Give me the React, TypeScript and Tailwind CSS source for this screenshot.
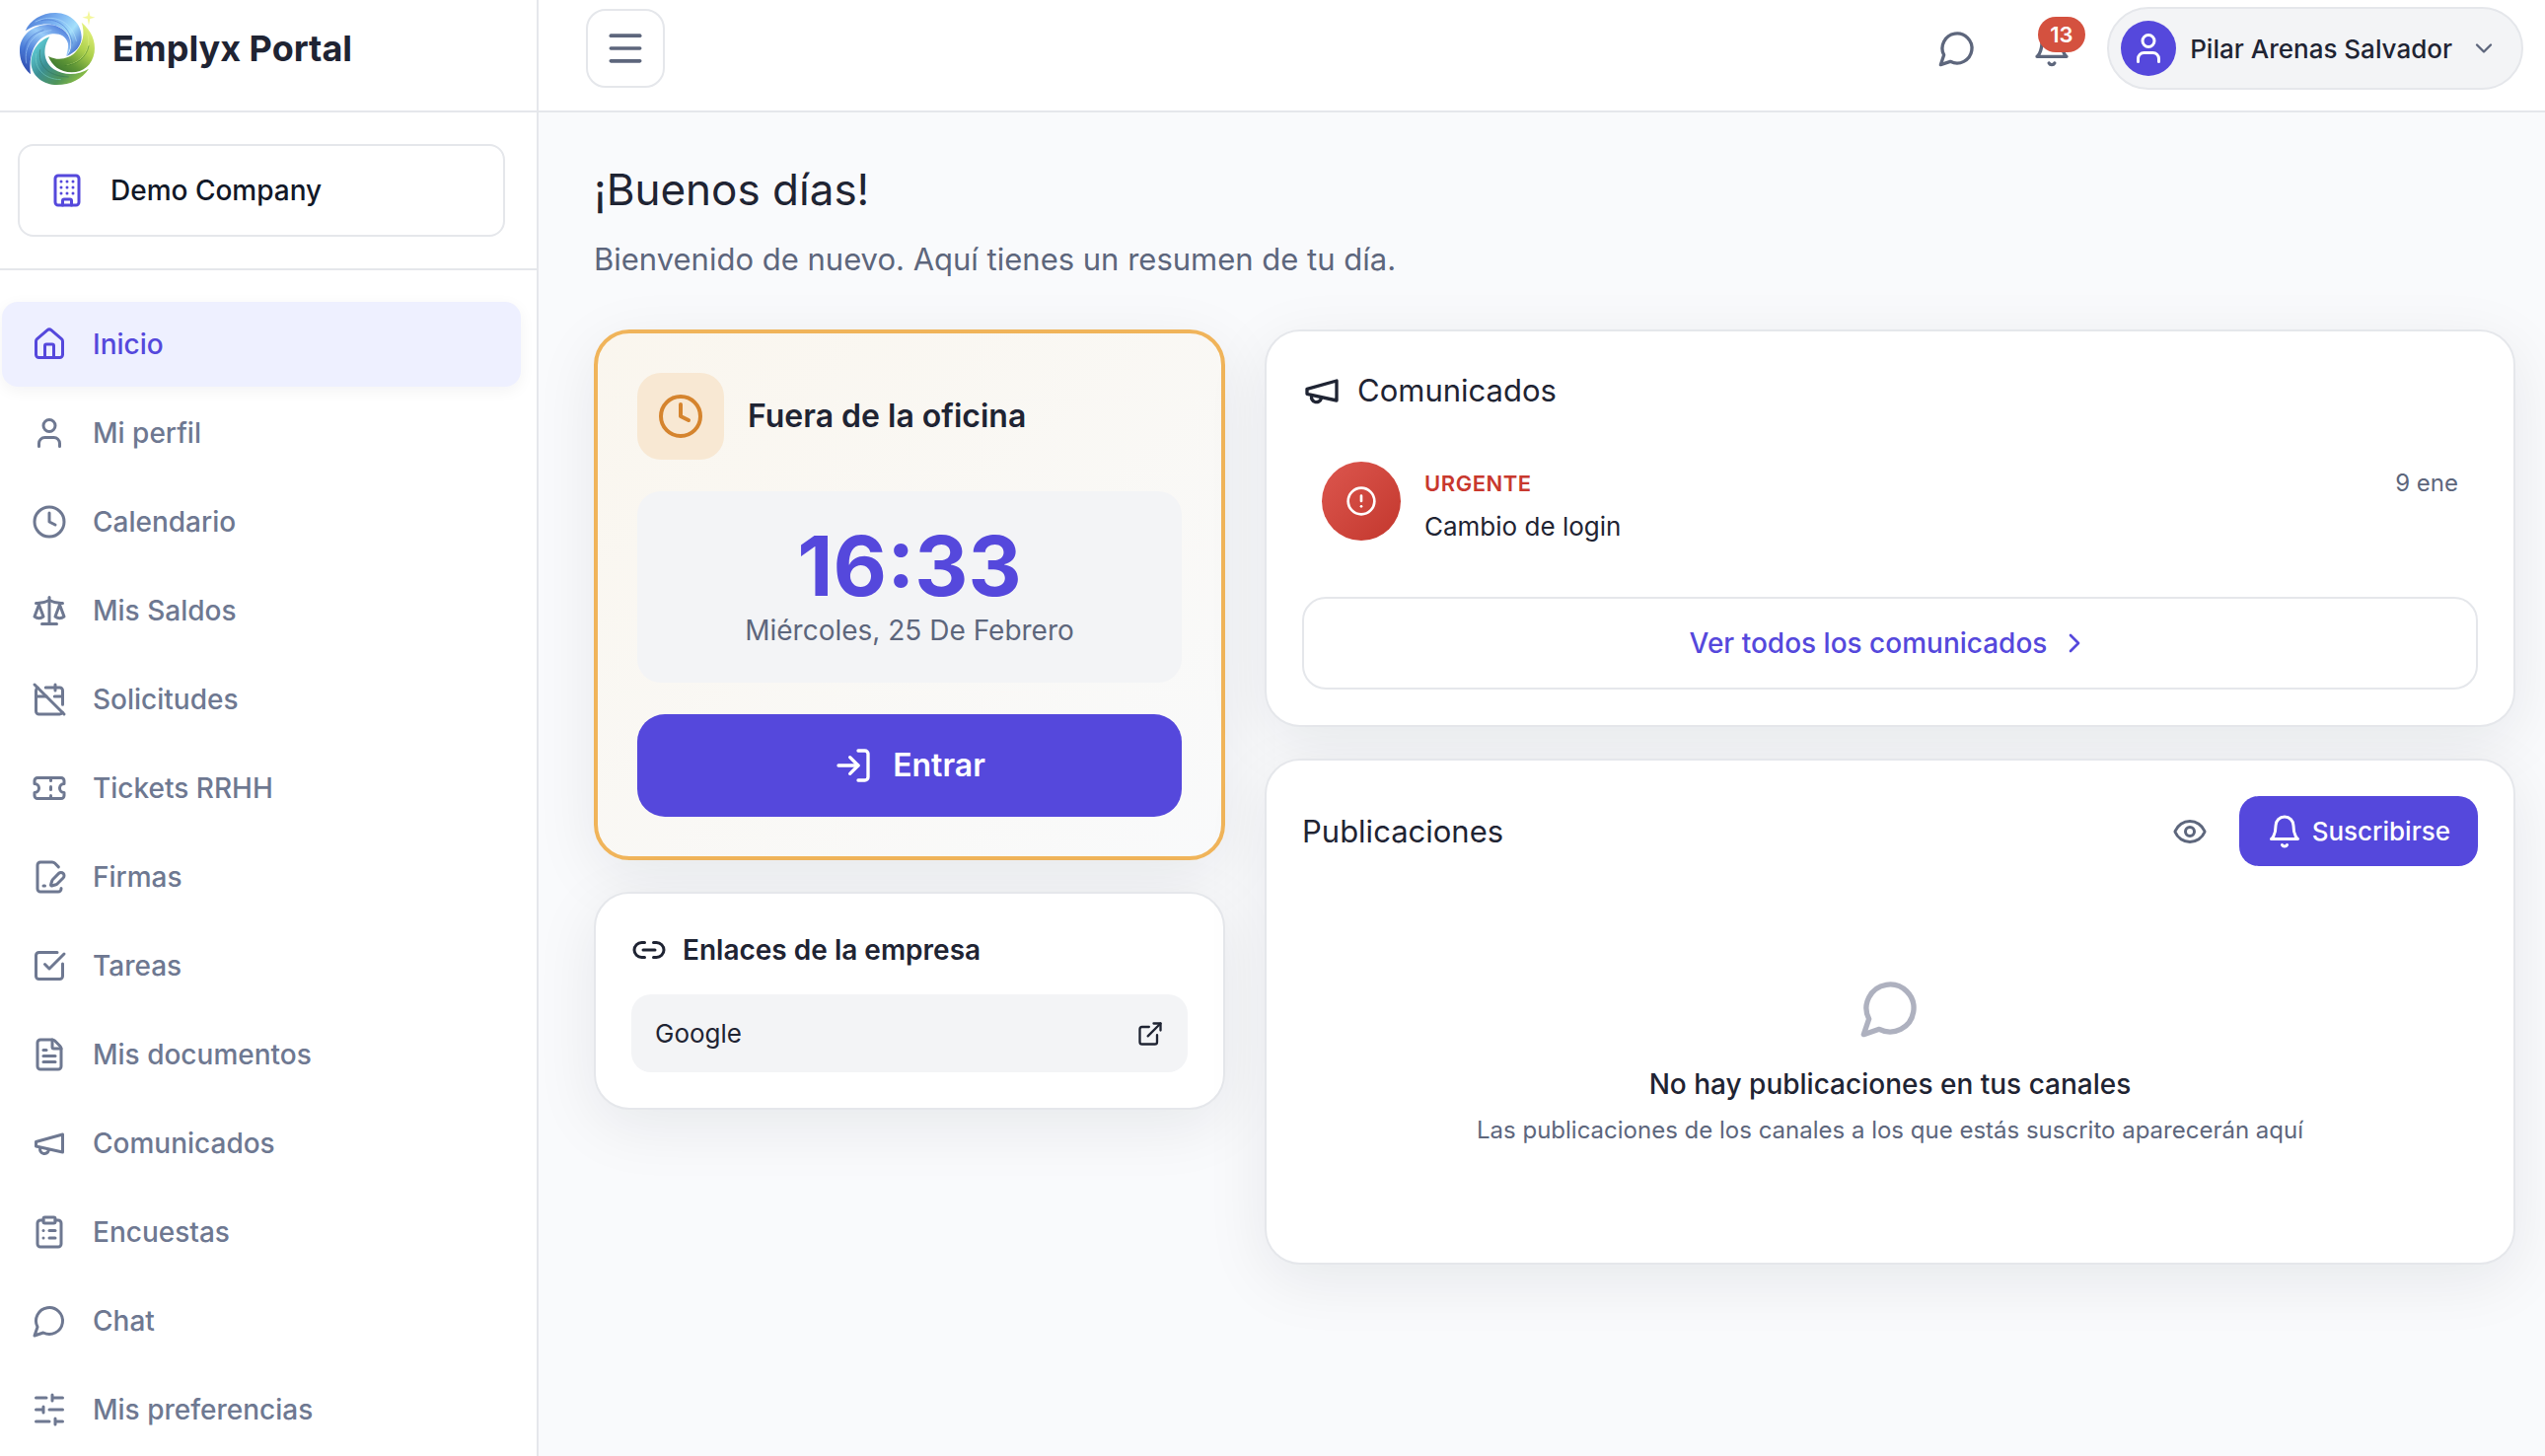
import React from 'react';
import { Home, User, Clock, Scale, CalendarOff, Ticket, FilePenLine, SquareCheckBig, FileText, ClipboardList, Building, Menu, ChevronDown, ChevronRight, LogIn, Link2, ExternalLink, CircleAlert, Eye } from 'lucide-react';

type IconProps = { className?: string };

const strokeProps = {
  viewBox: '0 0 24 24',
  fill: 'none',
  stroke: 'currentColor',
  strokeWidth: 2,
  strokeLinecap: 'round' as const,
  strokeLinejoin: 'round' as const,
  'aria-hidden': true,
};

const Megaphone = ({ className }: IconProps) => (
  <svg {...strokeProps} className={className}>
    <path d="m3 11 18-5v12L3 14v-3z" />
    <path d="M11.6 16.8a3 3 0 1 1-5.8-1.6" />
  </svg>
);

const Bubble = ({ className }: IconProps) => (
  <svg {...strokeProps} className={className}>
    <path d="M7.9 20A9 9 0 1 0 4 16.1L2 22Z" />
  </svg>
);

const Bell = ({ className }: IconProps) => (
  <svg {...strokeProps} className={className}>
    <path d="M6 8a6 6 0 0 1 12 0c0 7 3 9 3 9H3s3-2 3-9" />
    <path d="M10.3 21a1.94 1.94 0 0 0 3.4 0" />
  </svg>
);

const Sliders = ({ className }: IconProps) => (
  <svg {...strokeProps} className={className}>
    <path d="M21 4h-7M10 4H3M21 12h-9M8 12H3M21 20h-5M12 20H3M14 2v4M8 10v4M16 18v4" />
  </svg>
);

const Logo = () => (
  <svg viewBox="24 27 240 240" className="size-20 shrink-0" role="img" aria-label="Emplyx">
    <defs>
      <linearGradient id="sky" x1="0" y1="0.2" x2="1" y2="0.8">
        <stop offset="0" stopColor="#4f7fd8" />
        <stop offset="0.4" stopColor="#7db4f2" />
        <stop offset="0.7" stopColor="#a4e0fb" />
        <stop offset="1" stopColor="#3d68cc" />
      </linearGradient>
      <linearGradient id="blue" x1="0.1" y1="1" x2="0.8" y2="0">
        <stop offset="0" stopColor="#2b45a8" />
        <stop offset="0.35" stopColor="#4b7cd8" />
        <stop offset="0.7" stopColor="#98cbf8" />
        <stop offset="1" stopColor="#4a78da" />
      </linearGradient>
      <linearGradient id="lime" x1="0.9" y1="0" x2="0.2" y2="1">
        <stop offset="0" stopColor="#eff884" />
        <stop offset="0.45" stopColor="#acd04c" />
        <stop offset="0.75" stopColor="#5f9636" />
        <stop offset="1" stopColor="#3a7630" />
      </linearGradient>
      <linearGradient id="teal" x1="0" y1="0.2" x2="1" y2="0.9">
        <stop offset="0" stopColor="#62d2dc" />
        <stop offset="0.35" stopColor="#3c8f94" />
        <stop offset="0.65" stopColor="#4f9458" />
        <stop offset="1" stopColor="#a2ce3e" />
      </linearGradient>
    </defs>
    <path d="M47 94C62 60 98 38 140 39c44 1 78 32 78 74 0 26-18 46-46 58 14-14 16-32 12-50C174 78 106 54 47 94Z" fill="url(#sky)" />
    <path d="M63 226C38 204 29 178 30 150c2-46 44-74 84-75 36-1 66 22 70 52 2 16-2 32-12 44 2-14 7-26 5-38-6-24-26-32-48-30-42 6-74 48-66 123Z" fill="url(#blue)" />
    <path d="M218 68c30 26 44 56 39 92-7 38-33 60-69 60-36-1-60-20-71-49 30 16 64 8 84-14 22-26 28-56 17-89Z" fill="url(#lime)" />
    <path d="M121 112c-36 12-60 48-56 86 5 36 38 60 78 60 42 0 76-18 97-49-32 20-74 22-106 2-32-22-36-64-13-99Z" fill="url(#teal)" />
    <g fill="none" strokeWidth="3" strokeLinecap="round" opacity="0.5">
      <path d="M78 66c50-26 110-6 124 58" stroke="#bde8ff" />
      <path d="M96 62c44-10 86 16 94 70" stroke="#3f6fd0" />
      <path d="M50 192c-10-54 26-96 76-100" stroke="#b5dcff" />
      <path d="M42 160c4-36 26-58 60-68" stroke="#3c66c8" />
      <path d="M236 102c14 44-14 88-62 96" stroke="#e0f58a" />
      <path d="M240 140c-8 36-36 56-72 60" stroke="#3f7f2c" />
      <path d="M80 164c-8 42 24 78 74 78" stroke="#7fd9d0" />
      <path d="M92 152c-8 46 22 80 86 82" stroke="#2e6e5c" />
    </g>
    <path d="m240 32 4 17 15 4-15 4-4 20-4-20-16-4 16-4Z" fill="#f4f79c" />
  </svg>
);

const navItems = [
  { label: 'Inicio', icon: Home, active: true },
  { label: 'Mi perfil', icon: User },
  { label: 'Calendario', icon: Clock },
  { label: 'Mis Saldos', icon: Scale },
  { label: 'Solicitudes', icon: CalendarOff },
  { label: 'Tickets RRHH', icon: Ticket },
  { label: 'Firmas', icon: FilePenLine },
  { label: 'Tareas', icon: SquareCheckBig },
  { label: 'Mis documentos', icon: FileText },
  { label: 'Comunicados', icon: Megaphone },
  { label: 'Encuestas', icon: ClipboardList },
  { label: 'Chat', icon: Bubble },
  { label: 'Mis preferencias', icon: Sliders },
];

const cardShadow = 'shadow-[0_16px_64px_rgba(17,24,39,0.08)]';

const Sidebar = () => (
  <aside className="w-[546px] shrink-0 border-r-2 border-[#e5e7eb] bg-white">
    <div className="flex h-[114px] items-center gap-4 border-b-2 border-[#e5e7eb] pb-3.5 pl-[18px]">
      <Logo />
      <span className="text-[36px] font-bold">Emplyx Portal</span>
    </div>

    <div className="border-b-2 border-[#e5e7eb] py-8 pr-8 pl-[18px]">
      <button type="button" className="flex w-full items-center gap-[26px] rounded-2xl border-2 border-[#e5e7eb] px-[30px] py-6 text-[28px] leading-[42px] font-medium text-[#111827]">
        <Building className="size-9 text-[#5548dc]" />
        Demo Company
      </button>
    </div>

    <nav className="flex flex-col gap-1 py-8 pr-4 pl-0.5">
      {navItems.map((item) => (
        <a
          key={item.label}
          href="#"
          className={`flex h-[86px] shrink-0 items-center gap-[26px] rounded-2xl px-[30px] text-[28px] font-medium ${
            item.active ? 'bg-[#eef0ff] text-[#5548dc] shadow-[0_4px_16px_rgba(17,24,39,0.05)]' : 'text-[#6e7891]'
          }`}
        >
          <item.icon className="size-9 shrink-0" />
          {item.label}
        </a>
      ))}
    </nav>
  </aside>
);

const Header = () => (
  <header className="flex h-[114px] items-center justify-between border-b-2 border-[#e5e7eb] bg-white pr-[22px] pb-3.5 pl-12">
    <button type="button" aria-label="Menú" className="flex size-20 items-center justify-center rounded-[20px] border-2 border-[#e5e7eb] text-[#5d667c]">
      <Menu className="size-11" />
    </button>

    <div className="flex items-center text-[#5d667c]">
      <button type="button" aria-label="Chat" className="mr-14">
        <Bubble className="size-10" />
      </button>
      <button type="button" aria-label="Notificaciones" className="relative mr-9">
        <Bell className="size-10" />
        <span className="absolute -top-3 left-1.5 flex h-9 items-center rounded-full bg-[#d4513f] px-3 text-[22px] font-semibold text-white">13</span>
      </button>
      <button type="button" className="flex h-[84px] items-center gap-3.5 rounded-full border-2 border-[#e5e7eb] bg-[#f3f4f6] pr-6 pl-3">
        <span className="flex size-14 items-center justify-center rounded-full bg-[#5548dc] text-white">
          <User className="size-9" />
        </span>
        <span className="text-[26px] font-medium text-[#1f2433]">Pilar Arenas Salvador</span>
        <ChevronDown className="ml-1 size-7" />
      </button>
    </div>
  </header>
);

const ClockCard = () => (
  <section className={`rounded-[36px] border-4 border-[#f0b45a] bg-linear-to-br from-[#faf6ee] to-[#f9fafb] p-10 ${cardShadow}`}>
    <div className="flex items-center gap-6">
      <div className="flex size-[88px] items-center justify-center rounded-3xl bg-[#f8e8d3] text-[#d5842e]">
        <Clock className="size-12" />
      </div>
      <h2 className="text-[32px] font-semibold">Fuera de la oficina</h2>
    </div>

    <div className="mt-8 flex h-[194px] flex-col items-center justify-center rounded-3xl bg-[#f3f4f6]">
      <p className="text-[84px] leading-[88px] font-bold text-[#5548dc]">16:33</p>
      <p className="text-[28px] leading-[42px] text-[#5d667c]">Miércoles, 25 De Febrero</p>
    </div>

    <button type="button" className="mt-8 flex h-[104px] w-full items-center justify-center gap-5 rounded-[28px] bg-[#5548dc] text-[32px] font-semibold text-white">
      <LogIn className="size-10" />
      Entrar
    </button>
  </section>
);

const LinksCard = () => (
  <section className={`rounded-[36px] border-2 border-[#e5e7eb] bg-white p-9 ${cardShadow}`}>
    <h2 className="flex items-center gap-4 text-[28px] leading-[42px] font-semibold">
      <Link2 className="size-9" />
      Enlaces de la empresa
    </h2>
    <a href="#" className="mt-6 flex items-center justify-between rounded-[20px] bg-[#f3f4f6] px-6 py-5 text-[26px] leading-[39px]">
      Google
      <ExternalLink className="size-7" />
    </a>
  </section>
);

const AnnouncementsCard = () => (
  <section className={`rounded-[36px] border-2 border-[#e5e7eb] bg-white p-9 ${cardShadow}`}>
    <h2 className="flex items-center gap-4 text-[31px] leading-[48px]">
      <Megaphone className="size-10" />
      Comunicados
    </h2>

    <div className="mt-6 flex items-start gap-6 px-5 py-6">
      <div className="flex size-20 shrink-0 items-center justify-center rounded-full bg-linear-to-br from-[#dc564e] to-[#c3372d] text-white">
        <CircleAlert className="size-8" />
      </div>
      <div className="flex-1 pt-1">
        <div className="flex items-center justify-between">
          <span className="text-[22px] font-semibold tracking-wide text-[#c8382e]">URGENTE</span>
          <span className="text-[24px] leading-[36px] text-[#5d667c]">9 ene</span>
        </div>
        <p className="mt-1.5 text-[26px] leading-[39px]">Cambio de login</p>
      </div>
    </div>

    <button type="button" className="mt-7 flex w-full items-center justify-center gap-3 rounded-3xl border-2 border-[#e5e7eb] py-6 text-[28px] leading-[42px] font-medium text-[#5548dc]">
      Ver todos los comunicados
      <ChevronRight className="size-8" />
    </button>
  </section>
);

const PostsCard = () => (
  <section className={`rounded-[36px] border-2 border-[#e5e7eb] bg-white p-9 ${cardShadow}`}>
    <div className="flex items-center">
      <h2 className="flex-1 text-[31px] leading-[48px]">Publicaciones</h2>
      <button type="button" aria-label="Ver canales" className="mr-8 text-[#5d667c]">
        <Eye className="size-9" />
      </button>
      <button type="button" className="flex items-center gap-2.5 rounded-[20px] bg-[#5548dc] px-7 py-4 text-[26px] leading-[39px] font-medium text-white">
        <Bell className="size-9" />
        Suscribirse
      </button>
    </div>

    <div className="mt-8 flex flex-col items-center py-20 text-center">
      <Bubble className="size-16 text-[#aeb1bf]" />
      <p className="mt-6 text-[28px] leading-[42px] font-medium">No hay publicaciones en tus canales</p>
      <p className="mt-2 text-[24px] leading-[36px] text-[#5d667c]">Las publicaciones de los canales a los que estás suscrito aparecerán aquí</p>
    </div>
  </section>
);

const App = () => {
  return (
    <div className="flex h-screen overflow-hidden bg-[#f9fafc] font-['Inter',sans-serif] text-[#1f2433]">
      <Sidebar />

      <div className="min-w-0 flex-1">
        <Header />

        <main className="pt-11 pr-[30px] pb-10 pl-14">
          <h1 className="text-[44px] leading-[68px]">¡Buenos días!</h1>
          <p className="mt-3 text-[31px] leading-[50px] text-[#5d667c]">Bienvenido de nuevo. Aquí tienes un resumen de tu día.</p>

          <div className="mt-[46px] grid grid-cols-[640px_1fr] items-start gap-10">
            <div className="flex flex-col gap-8">
              <ClockCard />
              <LinksCard />
            </div>
            <div className="flex flex-col gap-8">
              <AnnouncementsCard />
              <PostsCard />
            </div>
          </div>
        </main>
      </div>
    </div>
  );
};

export default App;
